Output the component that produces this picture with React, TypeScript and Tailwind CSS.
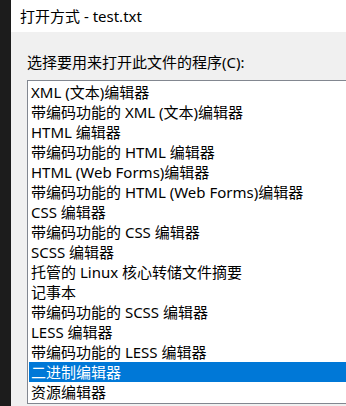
const ITEMS = [
  "XML (文本)编辑器",
  "带编码功能的 XML (文本)编辑器",
  "HTML 编辑器",
  "带编码功能的 HTML 编辑器",
  "HTML (Web Forms)编辑器",
  "带编码功能的 HTML (Web Forms)编辑器",
  "CSS 编辑器",
  "带编码功能的 CSS 编辑器",
  "SCSS 编辑器",
  "托管的 Linux 核心转储文件摘要",
  "记事本",
  "带编码功能的 SCSS 编辑器",
  "LESS 编辑器",
  "带编码功能的 LESS 编辑器",
  "二进制编辑器",
  "资源编辑器",
];

const SELECTED = 14;

export default function App() {
  return (
    <div
      className="flex h-[406px] w-[346px] overflow-hidden text-[15px] text-black"
      style={{ fontFamily: '"Noto Sans", "Noto Sans CJK SC", sans-serif' }}
    >
      <div className="w-[11px] shrink-0 bg-[#1c1c1c]" />
      <div className="flex min-w-0 flex-1 flex-col">
        {/* Title bar */}
        <div className="flex h-[32px] shrink-0 items-center bg-white pl-[9px]">
          打开方式 - test.txt
        </div>

        {/* Body */}
        <div className="flex-1 bg-[#f0f0f0] pl-[16px] pt-[20px]">
          <div className="leading-[20px]">选择要用来打开此文件的程序(C):</div>

          <div className="mt-[8px] w-[360px] border border-[#828790] bg-white p-[1px]">
            {ITEMS.map((item, i) => (
              <div
                key={item}
                className={
                  i === SELECTED
                    ? "h-[20px] whitespace-nowrap bg-[#0078d7] pl-[2px] leading-[20px] text-white"
                    : "h-[20px] whitespace-nowrap pl-[2px] leading-[20px]"
                }
              >
                {item}
              </div>
            ))}
          </div>
        </div>
      </div>
    </div>
  );
}
